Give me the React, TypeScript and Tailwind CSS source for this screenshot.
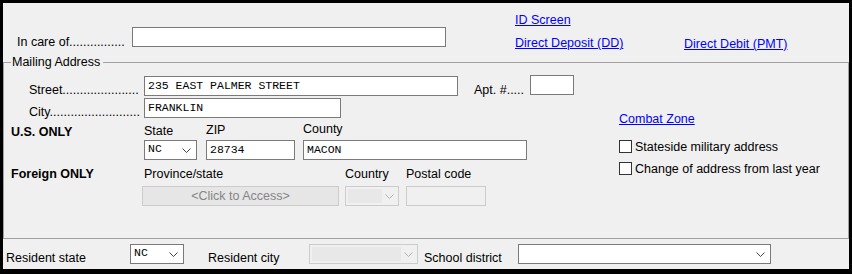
import * as React from "react";

const font = "font-['Liberation_Sans',Arial,sans-serif]";
const mono = "font-['Liberation_Mono','Courier_New',monospace]";

function Chevron({ color = "#444" }: { color?: string }) {
  return (
    <svg width="9" height="5" viewBox="0 0 9 5" className="shrink-0">
      <path d="M0.5 0.5 L4.5 4.5 L8.5 0.5" fill="none" stroke={color} strokeWidth="1" />
    </svg>
  );
}

function TextBox({ value = "", className = "" }: { value?: string; className?: string }) {
  return (
    <div
      className={`h-[20px] shrink-0 border border-[#7a7a7a] bg-white pl-[3px] text-[11.5px] leading-[18px] text-black ${mono} ${className}`}
    >
      {value}
    </div>
  );
}

function Select({ value = "", className = "" }: { value?: string; className?: string }) {
  return (
    <div
      className={`flex h-[20px] shrink-0 items-center justify-between border border-[#7a7a7a] bg-white pl-[3px] pr-[5px] text-[11.5px] text-black ${mono} ${className}`}
    >
      <span className="-mt-[2px]">{value}</span>
      <Chevron />
    </div>
  );
}

function DisabledSelect({ className = "" }: { className?: string }) {
  return (
    <div className={`flex h-[20px] shrink-0 items-center border border-[#cccccc] bg-[#f0f0f0] ${className}`}>
      <div className="m-[2px] h-[14px] flex-1 bg-[#e8e8e8]" />
      <div className="flex w-[14px] justify-center pr-[3px]">
        <Chevron color="#b0b0b0" />
      </div>
    </div>
  );
}

function Link({ children, className = "" }: { children: React.ReactNode; className?: string }) {
  return <span className={`text-[#0000ff] underline underline-offset-[1px] ${className}`}>{children}</span>;
}

function Check({ label, className = "" }: { label: string; className?: string }) {
  return (
    <div className={`flex h-[13px] items-center gap-[3px] ${className}`}>
      <div className="h-[13px] w-[13px] border border-[#333333] bg-white" />
      <span className="leading-[14px]">{label}</span>
    </div>
  );
}

export default function App() {
  return (
    <div className={`h-[274px] w-[852px] bg-black pb-[5px] pl-[3px] pr-[3px] pt-[3px] text-[12.5px] text-black ${font}`}>
      <div className="flex h-[266px] w-[846px] flex-col bg-[#f0f0f0]">
        {/* top area */}
        <div className="flex h-[52px]">
          <div className="flex w-[512px] items-start pl-[14px] pt-[24px]">
            <span className="mt-[8px] w-[115px] whitespace-nowrap leading-[14px]">In care of................</span>
            <TextBox className="w-[314px]" />
          </div>
          <div className="flex flex-col pt-[10px] leading-[14px]">
            <Link className="self-start">ID Screen</Link>
            <div className="mt-[9px] flex">
              <Link className="w-[169px]">Direct Deposit (DD)</Link>
              <Link className="mt-[1px]">Direct Debit (PMT)</Link>
            </div>
          </div>
        </div>

        {/* mailing address group */}
        <fieldset className="m-0 min-w-0 border border-[#a0a0a0] p-0 pb-[32px]">
          <legend className="ml-[7px] px-[1px] pr-[3px] leading-[15px]">Mailing Address</legend>
          <div className="flex">
            <div className="flex w-[615px] flex-col">
              <div className="mt-[6px] flex h-[20px] items-start leading-[14px]">
                <span className="ml-[25px] mt-[7px] w-[115px] whitespace-nowrap">Street......................</span>
                <TextBox value="235 EAST PALMER STREET" className="w-[314px]" />
                <span className="ml-[16px] mt-[7px] w-[56px] whitespace-nowrap">Apt. #.....</span>
                <TextBox className="-mt-[1px] w-[44px]" />
              </div>
              <div className="mt-[2px] flex h-[20px] items-start leading-[14px]">
                <span className="ml-[25px] mt-[7px] w-[115px] whitespace-nowrap">City..........................</span>
                <TextBox value="FRANKLIN" className="w-[197px]" />
              </div>
              <div className="mt-[5px] flex h-[16px] items-start leading-[14px]">
                <span className="ml-[7px] mt-[2px] w-[133px] font-bold">U.S. ONLY</span>
                <span className="mt-[1px] w-[62px]">State</span>
                <span className="w-[97px]">ZIP</span>
                <span className="-mt-[1px]">County</span>
              </div>
              <div className="mt-[1px] flex">
                <Select value="NC" className="ml-[140px] w-[53px]" />
                <TextBox value="28734" className="ml-[9px] w-[89px]" />
                <TextBox value="MACON" className="ml-[8px] w-[224px]" />
              </div>
              <div className="mt-[7px] flex h-[14px] items-center leading-[14px]">
                <span className="ml-[7px] w-[133px] font-bold">Foreign ONLY</span>
                <span className="w-[201px]">Province/state</span>
                <span className="w-[61px]">Country</span>
                <span>Postal code</span>
              </div>
              <div className="mt-[5px] flex">
                <div className="ml-[138px] flex h-[20px] w-[197px] items-center justify-center border border-[#cccccc] bg-[#e6e6e6] text-[#858585]">
                  &lt;Click to Access&gt;
                </div>
                <DisabledSelect className="ml-[6px] w-[54px]" />
                <div className="ml-[7px] h-[20px] w-[80px] border border-[#cccccc] bg-[#f0f0f0]" />
              </div>
            </div>
            <div className="flex flex-col leading-[14px]">
              <Link className="mt-[42px] self-start">Combat Zone</Link>
              <Check label="Stateside military address" className="mt-[14px]" />
              <Check label="Change of address from last year" className="mt-[9px]" />
            </div>
          </div>
        </fieldset>

        {/* bottom row */}
        <div className="flex items-start pt-[5px] leading-[14px]">
          <span className="ml-[3px] mt-[7px] w-[124px]">Resident state</span>
          <Select value="NC" className="w-[54px]" />
          <span className="ml-[24px] mt-[7px] w-[101px]">Resident city</span>
          <DisabledSelect className="w-[109px]" />
          <span className="ml-[6px] mt-[7px] w-[94px]">School district</span>
          <Select className="w-[253px]" />
        </div>
      </div>
    </div>
  );
}
